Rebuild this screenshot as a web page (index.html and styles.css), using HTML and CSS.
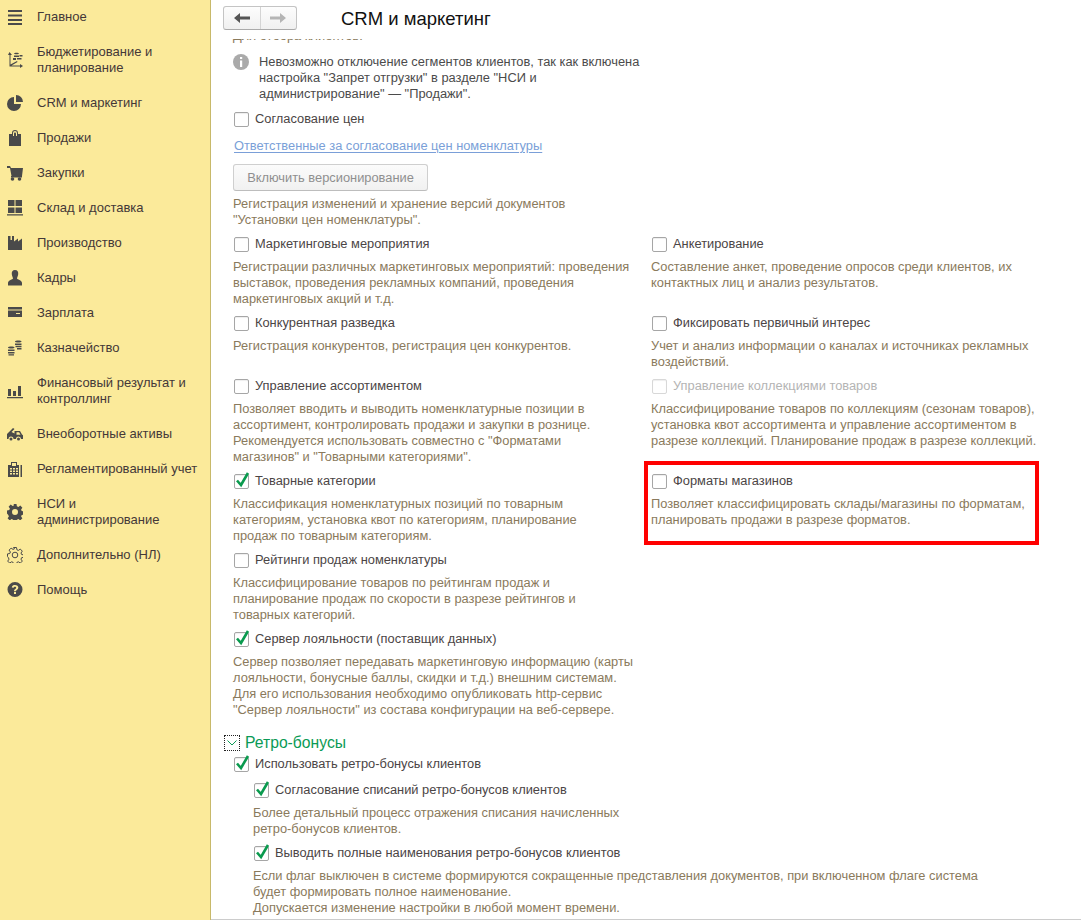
FILE: index.html
```html
<!DOCTYPE html>
<html lang="ru">

<head>
    <meta charset="UTF-8">
    <title>CRM и маркетинг</title>
    <link rel="stylesheet" href="styles.css">
</head>

<body>
    <nav class="sidebar">
        <a class="side_item">
            <svg class="side_icon" viewBox="0 0 16 16"><path d="M1 1h14v2H1zM1 5.500h14v2H1zM1 10h14v2H1zM1 14h14v2H1z"/></svg>
            <span>Главное</span>
        </a>
        <a class="side_item">
            <svg class="side_icon" viewBox="0 0 16 16"><path d="M2.500 0 5 3H3.500v9.500L10 9l.5 1-6 3.500H13V12l3 2-3 2v-1.500H2.500V3H1z"/><path d="M7 1.500C7 .5 12 .5 12 1.500S7 2.500 7 1.500zM7 3.500h5v1.500H7zM10 6h4.500v1.500H10zM6 6h3v2H6zM12.500 3h3v1.500h-3z"/></svg>
            <span>Бюджетирование и<br>планирование</span>
        </a>
        <a class="side_item">
            <svg class="side_icon" viewBox="0 0 16 16"><path d="M7 2a7 7 0 1 0 7 7H7z"/><path d="M9 0v7h7a7 7 0 0 0-7-7z"/></svg>
            <span>CRM и маркетинг</span>
        </a>
        <a class="side_item">
            <svg class="side_icon" viewBox="0 0 16 16"><path d="M2 4h3V3a3 3 0 0 1 6 0v1h3v12H2zM6 4v2h1V3.500C7 2 9 2 9 3.500V6h1V3a2 2 0 0 0-4 0z" fill-rule="evenodd"/></svg>
            <span>Продажи</span>
        </a>
        <a class="side_item">
            <svg class="side_icon" viewBox="0 0 16 16"><path d="M0 1h3l1 2h12l-1 8H4.500L3 3H0z"/><circle cx="5.500" cy="14" r="1.800"/><circle cx="12.500" cy="14" r="1.800"/><path d="M4 11h11v1.500H4z"/></svg>
            <span>Закупки</span>
        </a>
        <a class="side_item">
            <svg class="side_icon" viewBox="0 0 16 16"><path d="M1 0h6.500v6H1zM8.500 0H15v6H8.500zM1 7.500h6.500V13H1zM8.500 7.500H15V13H8.500zM0 14.200h16v1.300H0z"/></svg>
            <span>Склад и доставка</span>
        </a>
        <a class="side_item">
            <svg class="side_icon" viewBox="0 0 16 16"><path d="M1 1h2.500v4H5V1h2v5.500L11 3.500v3l4-3V15H1z"/></svg>
            <span>Производство</span>
        </a>
        <a class="side_item">
            <svg class="side_icon" viewBox="0 0 16 16"><path d="M8 0c2.500 0 3.500 2 3.200 4.200C11 6 10 7.500 10 8.500c0 1 5 1.500 5 4.500v2.500H1V13c0-3 5-3.500 5-4.500S5 6 4.800 4.200C4.500 2 5.500 0 8 0z"/></svg>
            <span>Кадры</span>
        </a>
        <a class="side_item">
            <svg class="side_icon" viewBox="0 0 16 16"><path d="M1 2h14v2.500H1zM1 5.500h14V12H1z"/><path class="icon_cut" d="M9 8h4v1H9z"/></svg>
            <span>Зарплата</span>
        </a>
        <a class="side_item">
            <svg class="side_icon" viewBox="0 0 16 16"><path d="M8 1.500C8 .2 14.500.2 14.500 1.500S8 2.800 8 1.500zM8 3.500h6.500V5H8zM8.500 5.800h6v1.400h-6zM10 8h4.500v1.400H10zM1 7.500C1 6.200 7.500 6.200 7.500 7.500S1 8.800 1 7.500zM1 9.500h6.500V11H1zM1 12h6.500v1.400H1zM1.500 14.200h5.500v1.300H1.500z"/></svg>
            <span>Казначейство</span>
        </a>
        <a class="side_item">
            <svg class="side_icon" viewBox="0 0 16 16"><path d="M1 6h3v7H1zM6 8h3v5H6zM11 3h3v10h-3zM0 14h16v1.300H0z"/></svg>
            <span>Финансовый результат и<br>контроллинг</span>
        </a>
        <a class="side_item">
            <svg class="side_icon" viewBox="0 0 16 16"><path d="M0 8 6 2l1.500 1L4.500 6l3 1.500V5H13l2 3.500 1 .8V13h-2a2.500 2.500 0 0 0-5 0H6.500a2.500 2.500 0 0 0-5 0H0zM9.500 6.300v2.500h4l-1.400-2.500z" fill-rule="evenodd"/><circle cx="4" cy="13" r="1.500"/><circle cx="11.500" cy="13" r="1.500"/></svg>
            <span>Внеоборотные активы</span>
        </a>
        <a class="side_item">
            <svg class="side_icon" viewBox="0 0 16 16"><path d="M4 1h6v3h2v12H1V4h3zM5 2v3h4V2zM3 7v1.500h2V7zM6 7v1.500h2V7zM9 7v1.500h2V7zM3 9.500V11h2V9.500zM6 9.500V11h2V9.500zM9 9.500V11h2V9.500zM3 12v1.500h2V12zM6 12v1.500h2V12zM9 12v1.500h2V12z" fill-rule="evenodd"/><path d="M13.500 4H15v12h-1.500z"/></svg>
            <span>Регламентированный учет</span>
        </a>
        <a class="side_item">
            <svg class="side_icon" viewBox="0 0 16 16"><path d="M6.500 0h3l.4 2.300 1.500.6 1.900-1.300 2.100 2.100-1.300 1.900.6 1.500 2.300.4v3l-2.300.4-.6 1.500 1.300 1.900-2.100 2.100-1.900-1.300-1.500.6-.4 2.300h-3l-.4-2.300-1.500-.6-1.900 1.300-2.100-2.100 1.300-1.900-.6-1.500L0 9.500v-3l2.300-.4.6-1.500L1.600 2.700l2.100-2.100 1.900 1.300 1.500-.6zM8 5a3 3 0 1 0 0 6 3 3 0 0 0 0-6z" fill-rule="evenodd"/></svg>
            <span>НСИ и<br>администрирование</span>
        </a>
        <a class="side_item">
            <svg class="side_icon side_icon_line" viewBox="0 0 16 16"><path d="M6.500.5h3l.4 2.300 1.500.6 1.900-1.300 2 2-1.300 1.900.6 1.500 2.300.4v2.400l-2.300.4-.6 1.500 1.300 1.900-2 2-1.900-1.300-1.500.6-.4 2.300h-3l-.4-2.300-1.500-.6-1.900 1.300-2-2 1.300-1.900-.6-1.500L.5 9.500V6.900l2.300-.4.6-1.500-1.300-1.900 2-2 1.900 1.300 1.500-.6z"/><circle cx="8" cy="8" r="2.800"/></svg>
            <span>Дополнительно (НЛ)</span>
        </a>
        <a class="side_item">
            <svg class="side_icon" viewBox="0 0 16 16"><path d="M8 0a7.500 7.500 0 1 0 0 15A7.500 7.500 0 0 0 8 0zM7 10h2v2H7zM4.800 5.500C5 3.500 6.500 3 8 3c2 0 3.300 1 3.300 2.600 0 1.200-.8 1.800-1.500 2.300-.6.400-.8.700-.8 1.300H7c0-1.200.4-1.800 1.200-2.300.6-.4 1-.7 1-1.200 0-.5-.5-.9-1.200-.9-.8 0-1.200.4-1.300 1z" fill-rule="evenodd"/></svg>
            <span>Помощь</span>
        </a>
    </nav>

    <main class="main">
        <header class="toolbar">
            <div class="nav_btns">
                <button class="nav_btn" type="button">
                    <svg viewBox="0 0 16 12" width="16" height="12"><path d="M0 6l6-5v3.500h10v3H6V11z" fill="#555"/></svg>
                </button>
                <button class="nav_btn" type="button">
                    <svg viewBox="0 0 16 12" width="16" height="12"><path d="M16 6l-6-5v3.500H0v3h10V11z" fill="#b5b5b5"/></svg>
                </button>
            </div>
            <h1 class="title">CRM и маркетинг</h1>
        </header>

        <div class="content">
            <p class="desc cut_line">Для отбора клиентов:</p>

            <div class="info">
                <svg class="info_icon" viewBox="0 0 16 16"><circle cx="8" cy="8" r="8" fill="#aaa"/><path d="M7 3h2.200v2H7zM7 6.500h2.200V13H7z" fill="#fff"/></svg>
                <span>Невозможно отключение сегментов клиентов, так как включена<br>настройка "Запрет отгрузки" в разделе "НСИ и<br>администрирование" — "Продажи".</span>
            </div>

            <label class="option first_option"><span class="check"></span>Согласование цен</label>
            <a class="link" href="#">Ответственные за согласование цен номенклатуры</a>
            <button class="grey_btn" type="button">Включить версионирование</button>
            <p class="desc">Регистрация изменений и хранение версий документов<br>"Установки цен номенклатуры".</p>

            <div class="columns">
                <div class="item">
                    <label class="option"><span class="check"></span>Маркетинговые мероприятия</label>
                    <p class="desc">Регистрации различных маркетинговых мероприятий: проведения<br>выставок, проведения рекламных компаний, проведения<br>маркетинговых акций и т.д.</p>
                </div>
                <div class="item">
                    <label class="option"><span class="check"></span>Анкетирование</label>
                    <p class="desc">Составление анкет, проведение опросов среди клиентов, их<br>контактных лиц и анализ результатов.</p>
                </div>

                <div class="item">
                    <label class="option"><span class="check"></span>Конкурентная разведка</label>
                    <p class="desc">Регистрация конкурентов, регистрация цен конкурентов.</p>
                </div>
                <div class="item">
                    <label class="option"><span class="check"></span>Фиксировать первичный интерес</label>
                    <p class="desc">Учет и анализ информации о каналах и источниках рекламных<br>воздействий.</p>
                </div>

                <div class="item">
                    <label class="option"><span class="check"></span>Управление ассортиментом</label>
                    <p class="desc">Позволяет вводить и выводить номенклатурные позиции в<br>ассортимент, контролировать продажи и закупки в рознице.<br>Рекомендуется использовать совместно с "Форматами<br>магазинов" и "Товарными категориями".</p>
                </div>
                <div class="item">
                    <label class="option option_off"><span class="check"></span>Управление коллекциями товаров</label>
                    <p class="desc">Классифицирование товаров по коллекциям (сезонам товаров),<br>установка квот ассортимента и управление ассортиментом в<br>разрезе коллекций. Планирование продаж в разрезе коллекций.</p>
                </div>

                <div class="item">
                    <label class="option"><span class="check checked"><svg viewBox="0 0 15 15"><path d="M3 6.500l4 4.500 7-12"/></svg></span>Товарные категории</label>
                    <p class="desc">Классификация номенклатурных позиций по товарным<br>категориям, установка квот по категориям, планирование<br>продаж по товарным категориям.</p>
                </div>
                <div class="item">
                    <label class="option"><span class="check"></span>Форматы магазинов</label>
                    <p class="desc">Позволяет классифицировать склады/магазины по форматам,<br>планировать продажи в разрезе форматов.</p>
                    <div class="red_frame"></div>
                </div>

                <div class="item wide">
                    <label class="option"><span class="check"></span>Рейтинги продаж номенклатуры</label>
                    <p class="desc">Классифицирование товаров по рейтингам продаж и<br>планирование продаж по скорости в разрезе рейтингов и<br>товарных категорий.</p>
                </div>

                <div class="item wide">
                    <label class="option"><span class="check checked"><svg viewBox="0 0 15 15"><path d="M3 6.500l4 4.500 7-12"/></svg></span>Сервер лояльности (поставщик данных)</label>
                    <p class="desc">Сервер позволяет передавать маркетинговую информацию (карты<br>лояльности, бонусные баллы, скидки и т.д.) внешним системам.<br>Для его использования необходимо опубликовать http-сервис<br>"Сервер лояльности" из состава конфигурации на веб-сервере.</p>
                </div>
            </div>

            <div class="group_head">
                <span class="collapse"><svg viewBox="0 0 10 6" width="10" height="6"><path d="M.5.500 5 5 9.500.500" fill="none" stroke="#0a9a55"/></svg></span>
                <h2 class="group_title">Ретро-бонусы</h2>
            </div>

            <label class="option"><span class="check checked"><svg viewBox="0 0 15 15"><path d="M3 6.500l4 4.500 7-12"/></svg></span>Использовать ретро-бонусы клиентов</label>

            <div class="nested">
                <div class="item">
                    <label class="option"><span class="check checked"><svg viewBox="0 0 15 15"><path d="M3 6.500l4 4.500 7-12"/></svg></span>Согласование списаний ретро-бонусов клиентов</label>
                    <p class="desc">Более детальный процесс отражения списания начисленных<br>ретро-бонусов клиентов.</p>
                </div>
                <div class="item">
                    <label class="option"><span class="check checked"><svg viewBox="0 0 15 15"><path d="M3 6.500l4 4.500 7-12"/></svg></span>Выводить полные наименования ретро-бонусов клиентов</label>
                    <p class="desc">Если флаг выключен в системе формируются сокращенные представления документов, при включенном флаге система<br>будет формировать полное наименование.<br>Допускается изменение настройки в любой момент времени.</p>
                </div>
            </div>
        </div>
    </main>
</body>

</html>
```

FILE: styles.css
```css
* {
    box-sizing: border-box;
}

body {
    margin: 0;
    height: 100vh;
    display: flex;
    overflow: hidden;
    background: #fff;
    font-family: "Liberation Sans", Arial, sans-serif;
    font-size: 13px;
    line-height: 16px;
    color: #4b4b4b;
}

/* left menu */
.sidebar {
    width: 211px;
    flex-shrink: 0;
    margin-top: -1px;
    background: #fbea9a;
    border-right: 1px solid #c8b96a;
}

.side_item {
    display: flex;
    align-items: center;
    gap: 14px;
    padding: 9.5px 0 9.5px 7px;
    color: #443838;
}

.side_icon {
    width: 16px;
    height: 16px;
    flex-shrink: 0;
    fill: #4a4a4a;
}

.side_icon_line {
    fill: none;
    stroke: #4a4a4a;
    stroke-width: 1;
}

.icon_cut {
    fill: #fbea9a;
}

/* top row */
.main {
    flex: 1;
    min-width: 0;
    display: flex;
    flex-direction: column;
}

.toolbar {
    height: 39px;
    flex-shrink: 0;
    display: flex;
    align-items: flex-start;
    padding: 6px 0 0 12px;
}

.nav_btns {
    display: flex;
    width: 74px;
    height: 24px;
    border: 1px solid #c4c4c4;
    border-bottom-color: #aaa;
    border-radius: 3px;
    background: linear-gradient(#fdfdfd, #f0f0f0);
}

.nav_btn {
    flex: 1;
    padding: 0;
    display: flex;
    align-items: center;
    justify-content: center;
    border: none;
    background: none;
}

.nav_btn + .nav_btn {
    border-left: 1px solid #d4d4d4;
}

.title {
    margin: 0 0 0 44px;
    font-size: 18.500px;
    line-height: 26px;
    font-weight: normal;
    color: #111;
}

/* scrolled form */
.content {
    flex: 1;
    min-height: 0;
    overflow: hidden;
    padding-left: 22px;
    border-bottom: 1px solid #ccc;
    font-size: 12.850px;
}

.desc {
    margin: 0;
    color: #8a7a5c;
    white-space: nowrap;
}

.cut_line {
    margin-top: -11px;
}

.info {
    display: flex;
    gap: 10px;
    margin-top: 10px;
}

.info_icon {
    width: 16px;
    height: 16px;
    flex-shrink: 0;
}

.option {
    display: flex;
    align-items: center;
    gap: 6px;
    height: 22px;
    margin-bottom: 4px;
    white-space: nowrap;
    color: #4b4545;
}

.first_option {
    margin-top: 6px;
    margin-bottom: 0;
}

.option_off {
    color: #b4b4b4;
}

.option_off .check {
    border-color: #d8d8d8;
}

.check {
    position: relative;
    width: 15px;
    height: 15px;
    margin-left: 1px;
    flex-shrink: 0;
    background: #fff;
    border: 1px solid #a6a6a6;
    border-radius: 2px;
    box-shadow: inset 0 1px 1px #eee;
}

.check svg {
    position: absolute;
    left: -1px;
    top: -1px;
    width: 15px;
    height: 15px;
    overflow: visible;
}

.check path {
    fill: none;
    stroke: #0a9a4e;
    stroke-width: 2.600;
}

.link {
    display: block;
    margin-top: 8px;
    margin-left: 1px;
    color: #7a9fd8;
    text-decoration: underline;
    text-underline-offset: 2px;
    width: max-content;
}

.grey_btn {
    display: block;
    width: 195px;
    height: 27px;
    margin: 10px 0 5px;
    padding: 0;
    font: inherit;
    color: #8f8f8f;
    background: linear-gradient(#fbfbfb, #f1f1f1);
    border: 1px solid #cfcfcf;
    border-bottom-color: #bdbdbd;
    border-radius: 3px;
}

.columns {
    display: grid;
    grid-template-columns: 418px 1fr;
    margin-top: 5px;
}

.item {
    position: relative;
    padding-bottom: 5px;
}

.wide {
    grid-column: 1 / 3;
}

.red_frame {
    position: absolute;
    left: -7px;
    top: -9px;
    width: 395px;
    height: 84px;
    border: 4px solid #f00;
}

.group_head {
    display: flex;
    align-items: center;
    gap: 5px;
    margin: 10px 0 0 -9px;
}

.collapse {
    width: 16px;
    height: 16px;
    display: flex;
    align-items: center;
    justify-content: center;
    border: 1px dotted #222;
}

.group_title {
    margin: 0;
    font-size: 15.700px;
    line-height: 20px;
    font-weight: normal;
    color: #0a9a55;
}

.nested {
    margin: 1px 0 0 20px;
}
```
